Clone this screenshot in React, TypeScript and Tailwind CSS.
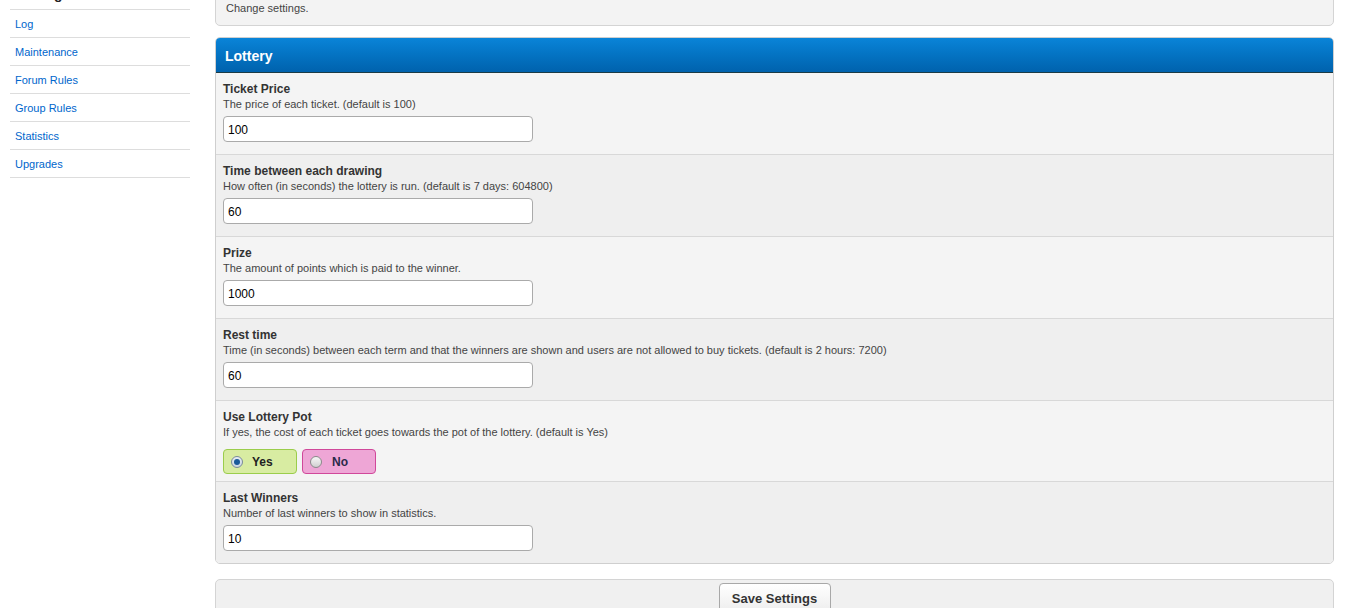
import React from "react";

const font = { fontFamily: '"Liberation Sans", Arial, sans-serif' };

type Row = { title: string; desc: string; value?: string; radio?: boolean };

const rows: Row[] = [
  { title: "Ticket Price", desc: "The price of each ticket. (default is 100)", value: "100" },
  { title: "Time between each drawing", desc: "How often (in seconds) the lottery is run. (default is 7 days: 604800)", value: "60" },
  { title: "Prize", desc: "The amount of points which is paid to the winner.", value: "1000" },
  { title: "Rest time", desc: "Time (in seconds) between each term and that the winners are shown and users are not allowed to buy tickets. (default is 2 hours: 7200)", value: "60" },
  { title: "Use Lottery Pot", desc: "If yes, the cost of each ticket goes towards the pot of the lottery. (default is Yes)", radio: true },
  { title: "Last Winners", desc: "Number of last winners to show in statistics.", value: "10" },
];

const links = ["Log", "Maintenance", "Forum Rules", "Group Rules", "Statistics", "Upgrades"];

export default function App() {
  return (
    <div className="w-[1349px] h-[608px] overflow-hidden bg-white flex items-start text-[#333]" style={font}>
      <aside className="w-[180px] ml-[10px] shrink-0">
        <div className="h-[9px] flex flex-col">
          <div className="-mt-[13px] pl-[5px] text-[14px] font-bold text-[#222] leading-[14px]">Settings</div>
        </div>
        <ul className="border-t border-[#ddd]">
          {links.map((l) => (
            <li key={l} className="h-[28px] border-b border-[#ddd] flex items-center pl-[5px] pt-[2px]">
              <a className="text-[11px] text-[#0066cc]">{l}</a>
            </li>
          ))}
        </ul>
      </aside>
      <main className="ml-[25px] w-[1119px] shrink-0 flex flex-col">
        <div className="shrink-0 -mt-[20px] h-[46px] bg-[#f3f3f3] border border-[#d4d4d4] rounded-[5px] flex items-end pl-[10px] pb-[10px]">
          <span className="text-[11px] text-[#444] leading-[14px]">Change settings.</span>
        </div>
        <section className="shrink-0 mt-[11px] border border-[#cfcfcf] rounded-[5px] overflow-hidden">
          <div className="h-[35px] bg-gradient-to-b from-[#0a84d8] to-[#0062ad] border-b border-[#1b3b45] flex items-center pl-[9px]">
            <span className="text-white font-bold text-[14px] pt-[2px]">Lottery</span>
          </div>
          {rows.map((r, i) => (
            <div
              key={r.title}
              className={`px-[7px] pt-[9px] ${i >= 4 ? "h-[81px]" : "h-[82px]"} ${i < rows.length - 1 ? "border-b border-[#d8d8d8]" : ""} ${i % 2 === 0 ? "bg-[#f4f4f4]" : "bg-[#efefef]"}`}
            >
              <div className="text-[12px] font-bold text-[#333] leading-[15px]">{r.title}</div>
              <div className="text-[11px] text-[#444] leading-[14px]">{r.desc}</div>
              {r.radio ? (
                <div className="mt-[10px] flex gap-[5px]">
                  <label className="w-[74px] h-[25px] rounded-[4px] bg-[#d8eca2] border border-[#9bcd4c] flex items-center pl-[7px]">
                    <span className="w-[12px] h-[12px] rounded-full border border-[#7a8a9a] bg-gradient-to-b from-[#e8eef4] to-[#c8d4e0] flex items-center justify-center">
                      <span className="w-[6px] h-[6px] rounded-full bg-[#1a5a9a]" />
                    </span>
                    <span className="ml-[9px] text-[12px] font-bold text-[#222]">Yes</span>
                  </label>
                  <label className="w-[74px] h-[25px] rounded-[4px] bg-[#eea6d6] border border-[#d0489a] flex items-center pl-[7px]">
                    <span className="w-[12px] h-[12px] rounded-full border border-[#8a8a8a] bg-gradient-to-b from-[#f8f8f8] to-[#d0d0d0]" />
                    <span className="ml-[10px] text-[12px] font-bold text-[#2a2a4a]">No</span>
                  </label>
                </div>
              ) : (
                <div className="mt-[5px] w-[310px] h-[26px] bg-white border border-[#aaa] rounded-[4px] flex items-center pl-[4px] pt-[2px] text-[12px] text-black">
                  {r.value}
                </div>
              )}
            </div>
          ))}
        </section>
        <div className="shrink-0 mt-[15px] h-[60px] bg-[#f0f0f0] border border-[#d4d4d4] rounded-[5px] flex justify-center items-start pt-[3px]">
          <button className="w-[112px] h-[32px] bg-gradient-to-b from-white to-[#ececec] border border-[#a8a8a8] rounded-[4px] text-[13px] font-bold text-[#333]">
            Save Settings
          </button>
        </div>
      </main>
    </div>
  );
}
